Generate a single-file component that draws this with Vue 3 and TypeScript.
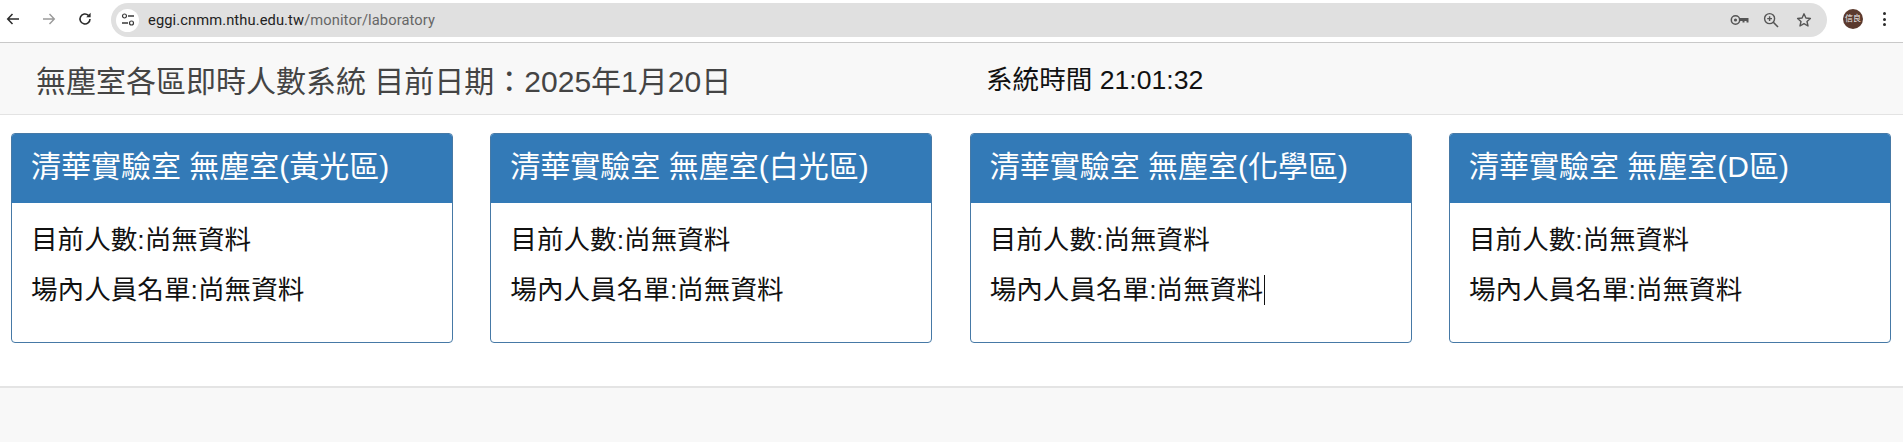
<script setup lang="ts">
const rooms = ['黃光區', '白光區', '化學區', 'D區']
</script>

<template>
  <div class="page">
    <div class="toolbar">
      <svg class="nav" viewBox="0 0 16 16" width="16" height="16"><path d="M14 8H3M7.5 3 2.7 8l4.8 5" fill="none" stroke="#2b2b2b" stroke-width="1.5"/></svg>
      <svg class="nav fwd" viewBox="0 0 16 16" width="16" height="16"><path d="M2 8h11M8.5 3l4.8 5-4.8 5" fill="none" stroke="#9a9a9a" stroke-width="1.4"/></svg>
      <svg class="nav rel" viewBox="0 0 16 16" width="16" height="16"><path d="M13 8a5 5 0 1 1-1.6-3.7" fill="none" stroke="#2b2b2b" stroke-width="1.6"/><path d="M13.6 1.8v4.4H9.2z" fill="#2b2b2b"/></svg>
      <div class="omnibox">
        <span class="tune">
          <svg viewBox="0 0 16 16" width="16" height="16"><circle cx="4.5" cy="4" r="2" fill="none" stroke="#3a3a3a" stroke-width="1.2"/><path d="M8 4h6M2 11h6" stroke="#3a3a3a" stroke-width="1.4"/><circle cx="11.5" cy="11" r="2" fill="none" stroke="#3a3a3a" stroke-width="1.2"/></svg>
        </span>
        <span class="url"><b>eggi.cnmm.nthu.edu.tw</b>/monitor/laboratory</span>
        <span class="omni-icons">
          <svg viewBox="0 0 20 14" width="20" height="14"><circle cx="5.5" cy="7" r="4.2" fill="none" stroke="#555" stroke-width="1.5"/><circle cx="5.5" cy="7" r="1.6" fill="#555"/><path d="M9.5 5h9v4.5h-2V8h-2v1.5h-2V8H9.5" fill="#555"/></svg>
          <svg class="zoom-icon" viewBox="0 0 16 16" width="16" height="16"><circle cx="6.6" cy="6.6" r="5" fill="none" stroke="#555" stroke-width="1.4"/><path d="m10.3 10.3 4.7 4.7" stroke="#555" stroke-width="1.6"/><path d="M4.2 6.6h4.8M6.6 4.2V9" stroke="#555" stroke-width="1.4"/></svg>
          <svg viewBox="0 0 16 16" width="16" height="16"><path d="m8 1.8 1.9 4.2 4.5.5-3.4 3 1 4.5L8 11.7 4 14l1-4.5-3.4-3 4.5-.5z" fill="none" stroke="#555" stroke-width="1.4" stroke-linejoin="round"/></svg>
        </span>
      </div>
      <span class="avatar">信良</span>
      <span class="dots"><i></i><i></i><i></i></span>
    </div>

    <header class="navbar">
      <div class="brand">無塵室各區即時人數系統 目前日期：2025年1月20日</div>
      <div class="clock">系統時間 21:01:32</div>
    </header>

    <main class="cards">
      <section v-for="room in rooms" :key="room" class="card">
        <h3 class="card-head">清華實驗室 無塵室({{ room }})</h3>
        <div class="card-body">
          <p class="line">目前人數:尚無資料</p>
          <p class="line">場內人員名單:尚無資料<span v-if="room === '化學區'" class="caret"></span></p>
        </div>
      </section>
    </main>

    <footer class="footer"></footer>
  </div>
</template>

<style scoped>
.page {
  width: 1903px;
  height: 442px;
  overflow: hidden;
  background: #fff;
  color: #111;
  font-family: "Liberation Sans", "Noto Sans CJK TC", sans-serif;
}
.toolbar {
  height: 43px;
  box-sizing: border-box;
  border-bottom: 1px solid #c9c9c9;
  display: flex;
  align-items: center;
  padding: 0 0 4px 5px;
  background: #fff;
}
.nav { flex: none; margin-right: 20px; }
.nav.fwd { margin-right: 20px; }
.nav.rel { margin-right: 18px; }
.omnibox {
  width: 1716px;
  height: 34px;
  flex: none;
  margin-top: 2px;
  border-radius: 17px;
  background: #e0e0e0;
  display: flex;
  align-items: center;
  padding: 0 15px 0 5px;
  box-sizing: border-box;
}
.tune {
  width: 23px;
  height: 23px;
  border-radius: 50%;
  background: #fff;
  display: flex;
  align-items: center;
  justify-content: center;
  flex: none;
}
.url {
  margin-left: 9px;
  font: 14.7px "Roboto", "Liberation Sans", sans-serif;
  color: #666;
  letter-spacing: 0.1px;
  flex: 1;
}
.url b { font-weight: 400; color: #222; }
.omni-icons { display: flex; align-items: center; }
.zoom-icon { margin: 0 17px 0 13px; }
.avatar {
  margin-left: 16px;
  width: 20px;
  height: 20px;
  border-radius: 50%;
  background: #5b3a2e;
  color: #eee;
  font-size: 8px;
  line-height: 20px;
  text-align: center;
  flex: none;
}
.dots {
  margin-left: 20px;
  display: flex;
  flex-direction: column;
  gap: 2.5px;
}
.dots i { display: block; width: 3px; height: 3px; border-radius: 50%; background: #2b2b2b; }
.navbar {
  height: 72px;
  box-sizing: border-box;
  background: #f8f8f8;
  border-bottom: 1px solid #e3e3e3;
  display: flex;
  align-items: center;
}
.brand {
  margin-left: 36px;
  width: 950px;
  font-size: 30px;
  line-height: 40px;
  color: #444;
  padding-top: 7px;
}
.clock {
  font-size: 26.6px;
  line-height: 32px;
  color: #111;
  padding-top: 3px;
}
.cards {
  display: grid;
  grid-template-columns: repeat(4, 442px);
  justify-content: space-between;
  padding: 18px 12px 0 11px;
  height: 271px;
  box-sizing: border-box;
  background: #fff;
}
.card {
  height: 210px;
  box-sizing: border-box;
  border: 1px solid #4679a6;
  border-radius: 4px;
  background: #fff;
  overflow: hidden;
}
.card-head {
  margin: 0;
  height: 69px;
  box-sizing: border-box;
  margin-inline: -1px;
  padding: 0 20px;
  background: #337ab7;
  color: #fff;
  font-size: 30px;
  font-weight: 400;
  line-height: 66px;
}
.card-body { padding: 19px 19px 0; }
.line {
  margin: 0 0 13px;
  font-size: 26.6px;
  line-height: 37px;
  color: #111;
}
.caret {
  display: inline-block;
  width: 1px;
  height: 30px;
  background: #111;
  vertical-align: -6px;
  margin-left: 1px;
}
.footer {
  height: 56px;
  background: #f8f8f8;
  border-top: 2px solid #e4e4e4;
  box-sizing: border-box;
}
</style>
